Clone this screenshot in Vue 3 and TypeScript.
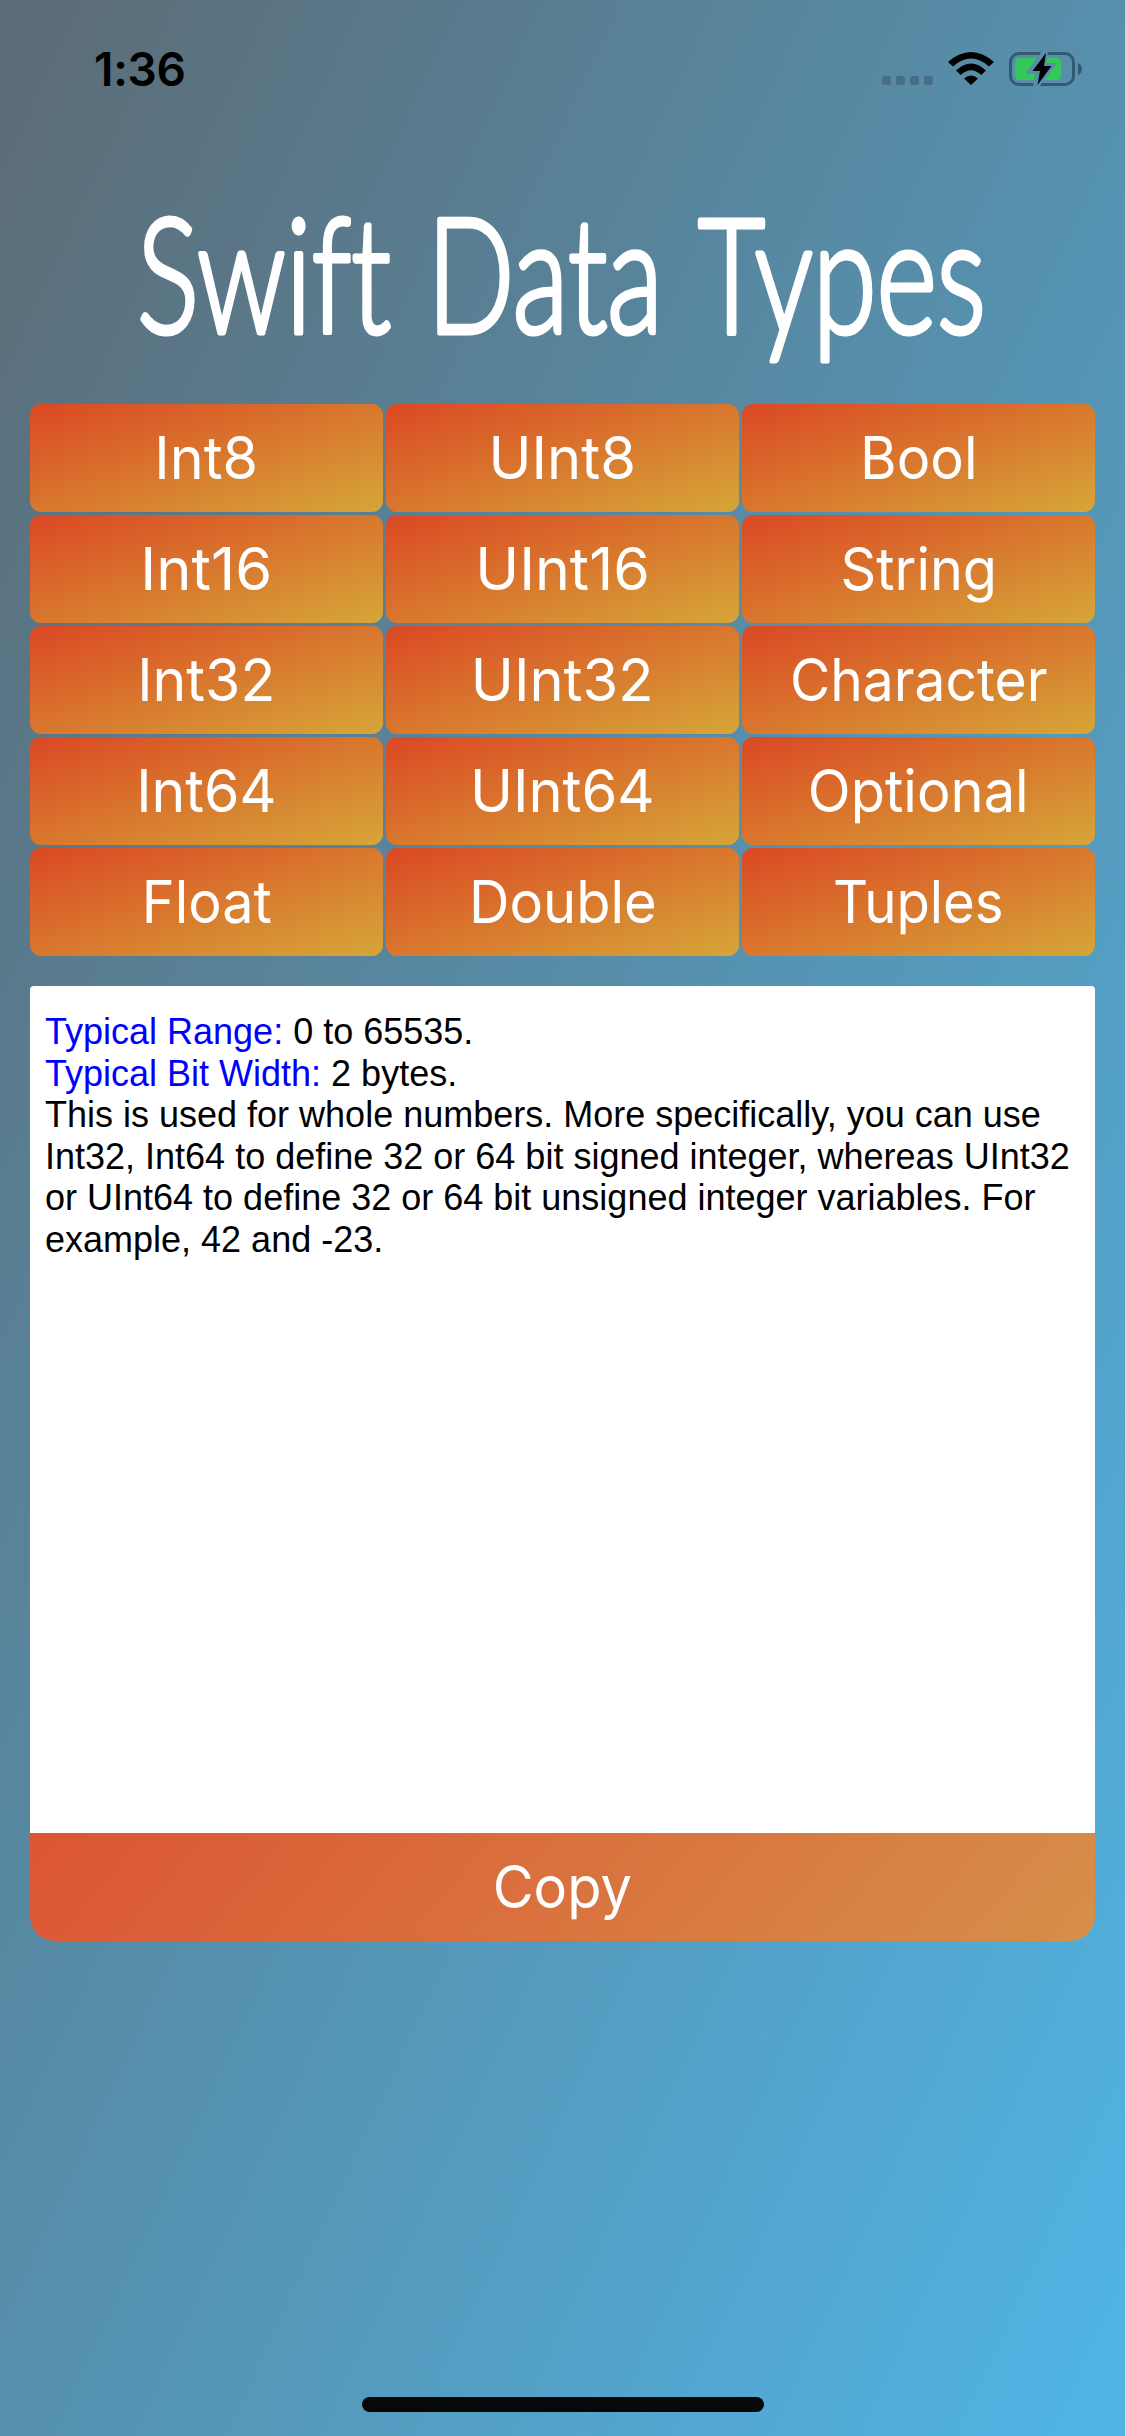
<script setup lang="ts">
interface TitleWord {
  text: string
  x: number
  width: number
}

interface DataType {
  name: string
  stretch: number
}

const titleWords: TitleWord[] = [
  { text: 'Swift', x: 137, width: 254 },
  { text: 'Data', x: 427, width: 236 },
  { text: 'Types', x: 698, width: 288 },
]

const dataTypes: DataType[] = [
  { name: 'Int8', stretch: 0.975 },
  { name: 'UInt8', stretch: 0.98 },
  { name: 'Bool', stretch: 0.95 },
  { name: 'Int16', stretch: 1.01 },
  { name: 'UInt16', stretch: 1 },
  { name: 'String', stretch: 0.945 },
  { name: 'Int32', stretch: 0.97 },
  { name: 'UInt32', stretch: 0.98 },
  { name: 'Character', stretch: 0.935 },
  { name: 'Int64', stretch: 0.97 },
  { name: 'UInt64', stretch: 0.98 },
  { name: 'Optional', stretch: 0.95 },
  { name: 'Float', stretch: 0.945 },
  { name: 'Double', stretch: 0.95 },
  { name: 'Tuples', stretch: 0.925 },
]
</script>

<template>
  <main class="screen">
    <header class="status">
      <span class="time">1:36</span>
      <svg class="indicators" width="202" height="36" viewBox="0 0 202 36">
        <defs>
          <mask id="bolt-gap" maskUnits="userSpaceOnUse" x="0" y="0" width="202" height="36">
            <rect width="202" height="36" fill="#fff" />
            <path d="M165 1 151 20h8l-3 15 15-20h-8z" fill="#000" stroke="#000" stroke-width="6" />
          </mask>
        </defs>
        <g fill="#486e86">
          <rect x="2" y="25" width="9" height="9" rx="2.8" />
          <rect x="16" y="25" width="9" height="9" rx="2.8" />
          <rect x="30" y="25" width="9" height="9" rx="2.8" />
          <rect x="44" y="25" width="9" height="9" rx="2.8" />
        </g>
        <path d="M68 11Q91-9 114 11L109 15.500Q91-.5 73 15.500ZM76 19.500Q91 5.500 106 19.500L101.300 24Q91 14.500 80.700 24ZM84 27.500Q91 21.500 98 27.500L91 34Z" />
        <g mask="url(#bolt-gap)">
          <rect x="130.500" y="2.500" width="63" height="31" rx="8.500" fill="none" stroke="#355a70" stroke-width="3" />
          <rect x="135" y="7" width="46" height="22" rx="4.500" fill="#34c759" />
        </g>
        <path d="M198 12Q202 14 202 18T198 24Z" fill="#355a70" />
        <path d="M166 2 152.500 20h7.500l-2.500 14 14-19h-7.500z" />
      </svg>
    </header>

    <svg class="title" width="1125" height="264" viewBox="0 0 1125 264">
      <text
        v-for="word in titleWords"
        :key="word.text"
        :x="word.x"
        y="193"
        :textLength="word.width"
        lengthAdjust="spacingAndGlyphs"
      >{{ word.text }}</text>
    </svg>

    <section class="types">
      <button v-for="type in dataTypes" :key="type.name" class="type">
        <span class="label" :style="{ transform: `scaleX(${type.stretch})` }">{{ type.name }}</span>
      </button>
    </section>

    <section class="details">
      <p><span class="key">Typical Range:</span> 0 to 65535.</p>
      <p><span class="key">Typical Bit Width:</span> 2 bytes.</p>
      <p>
        This is used for whole numbers. More specifically, you can use<br />
        Int32, Int64 to define 32 or 64 bit signed integer, whereas UInt32<br />
        or UInt64 to define 32 or 64 bit unsigned integer variables. For<br />
        example, 42 and -23.
      </p>
    </section>
    <button class="copy"><span class="label copy-label">Copy</span></button>

    <div class="home-indicator"></div>
  </main>
</template>

<style>
body {
  margin: 0;
}
</style>

<style scoped>
.screen {
  box-sizing: border-box;
  display: flex;
  flex-direction: column;
  width: 1125px;
  height: 2436px;
  overflow: hidden;
  background: linear-gradient(to bottom right, #5c6b75, #50b5e6);
  font-family: Inter, "Liberation Sans", sans-serif;
}

.status {
  display: flex;
  justify-content: space-between;
  align-items: flex-start;
  box-sizing: border-box;
  height: 140px;
  padding: 51px 43px 0 94px;
}

.time {
  font-size: 46px;
  font-weight: 600;
  line-height: 36px;
  letter-spacing: -0.3px;
  color: #000;
}

.title {
  display: block;
  flex: none;
}

.title text {
  font-family: Lato, sans-serif;
  font-size: 160px;
  font-weight: 300;
  font-variant-ligatures: none;
  fill: #fff;
  stroke: #fff;
  stroke-width: 5px;
  stroke-linejoin: round;
}

.types {
  display: grid;
  grid-template-columns: repeat(3, 353px);
  grid-auto-rows: 108px;
  gap: 3px;
  margin: 0 30px 30px;
}

.type,
.copy {
  border: 0;
  padding: 0;
  color: #fff;
  font-family: Inter, "Liberation Sans", sans-serif;
  font-size: 59px;
  font-weight: 400;
  line-height: 72px;
}

.type {
  border-radius: 11px;
  background: linear-gradient(to bottom right, #db4824, #d6a638);
}

.label {
  display: inline-block;
}

.copy-label {
  transform: scaleX(0.95);
}

.details {
  box-sizing: border-box;
  height: 847px;
  margin: 0 30px;
  padding: 25px 15px;
  border-radius: 4px 4px 0 0;
  background: #fff;
  color: #000;
  font-family: "Liberation Sans", Arial, sans-serif;
  font-size: 36px;
  line-height: 41.5px;
  white-space: nowrap;
}

.details p {
  margin: 0;
}

.key {
  color: #00f;
}

.copy {
  height: 108px;
  margin: 0 30px;
  border-radius: 0 0 25px 25px;
  background: linear-gradient(130deg, #dc5533, #d68f49);
}

.home-indicator {
  width: 402px;
  height: 15px;
  margin: auto auto 24px;
  border-radius: 8px;
  background: #080808;
}
</style>
